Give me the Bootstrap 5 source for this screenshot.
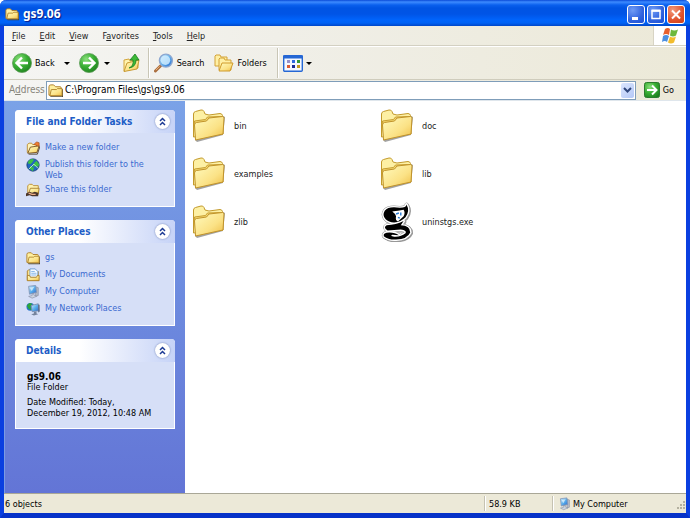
<!DOCTYPE html>
<html lang="en">
<head>
<meta charset="utf-8">
<meta name="viewport" content="width=device-width, initial-scale=1">
<title>gs9.06</title>
<link href="https://cdn.jsdelivr.net/npm/bootstrap@5.3.0/dist/css/bootstrap.min.css" rel="stylesheet">
<style>
body{font-family:"DejaVu Sans Condensed","DejaVu Sans",Tahoma,sans-serif;font-size:9px;line-height:12px;color:#000;background:#fff}
button,input{font:inherit;color:inherit;border:0;background:none;padding:0}
svg{display:block;flex:none}
.win{min-height:100vh;border:solid #0a3fe0;border-width:0 4px 5px;border-bottom-color:#0632c8;border-radius:6px 6px 0 0;background:#efeddf}
.titlebar{height:26px;margin:0 -4px;padding:2px 5px 0;border-radius:6px 6px 0 0;background:linear-gradient(#0a4ad8,#3d8bff 2px,#0a60ee 5px,#0054e3 8px,#0054e6 14px,#0064fc 20px,#0062f4 23px,#0046c8)}
.caption-text{font-family:"Noto Sans","Open Sans",sans-serif;font-size:12px;font-weight:700;line-height:16px;color:#fff;text-shadow:1px 1px 1px #0a1883}
.cap-set{gap:2px}
.cap-btn{width:18px;height:19px;border:1px solid #fff;border-radius:3px;background:radial-gradient(circle at 30% 25%,#6f9bf5,#2f62de 60%,#1c4fd4)}
.cap-close{background:radial-gradient(circle at 30% 25%,#f29a7c,#e0512b 60%,#cb3f17)}
.chrome{background:linear-gradient(90deg,#f5f5f3,#f0efe8 40%,#ece9d8)}
.menubar{height:20px;border-bottom:1px solid #d3d0c2}
.menu-items{gap:14px;padding-left:8px}
.menubar a{color:#222;text-decoration:none}
.flag{width:33px;background:#fff;border-left:1px solid #d8d4c4}
.toolbar{height:34px;border-top:1px solid #fff;border-bottom:1px solid #cfccbc;padding-left:8px}
.tool{gap:3px}
.tool-gap{margin-left:10px}
.hist{padding:6px 5px}
.vsep{width:2px;height:30px;border-left:1px solid #c9c6b6;border-right:1px solid #fff}
.caret{width:0;border:3px solid transparent;border-top-color:#000;border-bottom:0}
.addressbar{height:20px;padding-left:5px}
.addressbar label{color:#87857b;width:37px}
.address{height:19px;border:1px solid #7f9db9;background:#fff;padding:1px;gap:2px}
.address input{outline:0;min-width:0}
.addressbar label,.address input{font-size:10px}
.drop{width:13px;background:linear-gradient(135deg,#dbe6fe,#b4c8f6);border-radius:2px;color:#30477c}
.main{border-top:1px solid #dfe6ec}
.side{width:181px;padding:9px 10px 10px;gap:13px;border-left:1px solid #7b9be4;background:linear-gradient(#7ba2e7,#6d8bdf 50%,#6375d6)}
.box{background:#d6dff7;border:1px solid #fff;border-top:0;border-radius:4px 4px 0 0}
.box-head{height:23px;margin:0 -1px;padding:0 5px 0 11px;border-radius:4px 4px 0 0;background:linear-gradient(90deg,#fff 40%,#c6d3f7);color:#215dc6;font-size:10px;line-height:12px;font-weight:700}
.round{width:15px;height:15px;border-radius:50%;background:#fff;box-shadow:0 0 2px #6f80b4;color:#1c3a94}
.tasks{padding:9px 20px 8px 10px;gap:3px}
.tasks a{color:#3a6ad0;text-decoration:none;line-height:11px;gap:5px;min-height:14px}
.tasks svg{margin-top:-1px}
.details{padding:9px 20px 9px 11px;line-height:11px}
.details strong{font-size:10px}
.files{display:grid;grid-template-columns:repeat(auto-fill,188px);grid-auto-rows:48px;align-content:start;padding:1px 0 0 7px}
.files a{color:#222;text-decoration:none;gap:8px}
.statusbar{height:20px;padding-left:1px;border-top:1px solid #a9a797;background:#ece9d8}
.stat{border-left:1px solid #c5c2b2;box-shadow:inset 1px 0 #fff;height:15px}
.size{width:68px;padding-left:4px}
.zone{width:134px;padding-left:5px;gap:2px}
</style>
<script src="https://cdn.jsdelivr.net/npm/bootstrap@5.3.0/dist/js/bootstrap.bundle.min.js"></script>
</head>
<body>
<svg width="0" height="0" class="position-absolute" aria-hidden="true">
<defs>
<linearGradient id="gy" x1="0" y1="0" x2="1" y2="1"><stop offset="0" stop-color="#fffbc0"/><stop offset=".6" stop-color="#fbe286"/><stop offset="1" stop-color="#eebd45"/></linearGradient>
<radialGradient id="gg" cx=".35" cy=".3" r=".8"><stop offset="0" stop-color="#8be07c"/><stop offset=".5" stop-color="#3aaf35"/><stop offset="1" stop-color="#1c7e1c"/></radialGradient>
<linearGradient id="gb" x1="0" y1="0" x2="1" y2="1"><stop offset="0" stop-color="#d8f4ff"/><stop offset=".5" stop-color="#5ab0ee"/><stop offset="1" stop-color="#2a66c8"/></linearGradient>
<path id="gs-body" d="M27 1.500Q27 5 20 5Q8 3 4 8Q1 13 5 17Q8 20 14 20.500Q21 20 26 15Q31 8 27 1.500zM24 19Q16 23 6 23.500Q2 26 7 29L21 28Q28 29 26 32Q21 36 14 35.500Q9 35 12 33.500L19 34Q15 31 9 31Q2 31 3 35Q8 39 16 38.500Q28 38 31 31Q31 24 21 23.500z"/>
</defs>
<symbol id="bigfolder" viewBox="0 0 34 34"><path d="M3 31l2 2 26-7 2-18-2-1z" fill="#555" opacity=".55"/><path d="M1.500 28V5q0-2 2-2.500L9 1q2-.5 3 1.500l1 2.500 4 1 11-1.500q2 0 2.500 2L31 25z" fill="#fdf0a4" stroke="#c39a2c"/><path d="M2.500 12l11-1.500 2-2.500L30 7.500v16L4 30z" fill="#f3d870" stroke="#c79d30"/><path d="M3.500 31L2.500 16q0-2 2-2.500l10-1.500 2.500-3 13.500-1.500q1.500 0 1.500 1.500L31 25z" fill="url(#gy)" stroke="#c1932a"/></symbol>
<symbol id="folder" viewBox="0 0 16 16"><path d="M2 14h13V6l1 1v8H3z" fill="#4d4530"/><path d="M1 13V4q0-2 2-2h3l2 2h5q1 0 1 1v8z" fill="#fff0a0" stroke="#ad7b22"/><path d="M2 13.500L3.500 7H9l1-1h5v7.500z" fill="url(#gy)" stroke="#b1842a"/></symbol>
<symbol id="newfolder" viewBox="0 0 16 16"><path d="M1.500 13V4l2-1.500h3l1 1.500H12v9z" fill="#fff3b8" stroke="#b98a2e"/><path d="M2 14L5 7l10-1.500L12.500 13z" fill="url(#gy)" stroke="#75501d"/><path d="M9 4l3-3 3 1v4z" fill="#f07d30" stroke="#9c4612" stroke-width=".7"/><path d="M3 15h10l3-9" fill="none" stroke="#493721"/></symbol>
<symbol id="globe" viewBox="0 0 16 16"><circle cx="8" cy="8" r="7" fill="#2166bf" stroke="#143f7a"/><path d="M3 3q4-3 6-1L7 5 5 7 2 6zM9 6l3-3 3 4-1 3-3-1-3 1zM5 9l4 2-1 4-4-3z" fill="#3dc247"/><path d="M3 13l6-6 5 5" stroke="#c9f2d6" fill="none"/></symbol>
<symbol id="sharefolder" viewBox="0 0 16 16"><path d="M2 12V3l2-1.500h3L8.500 3H14v9z" fill="#fff3b0" stroke="#b98a2e"/><path d="M3 12L5 6h10l-1 7z" fill="url(#gy)" stroke="#a47928"/><path d="M0 12l4-2 3 1 3-1 4 1v4H7l-3-1-4 1z" fill="#4a352b"/><path d="M3 11.500l4 1.500h4" stroke="#efb087" stroke-width="1.500" fill="none"/></symbol>
<symbol id="docs" viewBox="0 0 16 16"><path d="M1.500 14V3.500L3 2h3l2 2h6v10z" fill="#fbe391" stroke="#a87a22"/><path d="M4.500 9V1h6l3 3v7h-9z" fill="#f4faff" stroke="#6797ce"/><path d="M6 4h4M6 6h6M6 8h6" stroke="#7fb1e6"/><path d="M1.500 14.500v-6H4l1 2h7l1-2h2v6z" fill="url(#gy)" stroke="#a87a22"/></symbol>
<symbol id="pc" viewBox="0 0 16 16"><path d="M11 2l3 1v9l-3 1z" fill="#b7bdc9" stroke="#747c90" stroke-width=".6"/><path d="M3 1.500l8-1 1 8-8 2z" fill="url(#gb)" stroke="#8496b6"/><path d="M4.500 3l5-1-3 5z" fill="#fff" opacity=".6"/><path d="M7 10l2-.5v2L12 13l-5 2-4-2 4-1z" fill="#cdd5e1" stroke="#76809a" stroke-width=".6"/></symbol>
<symbol id="net" viewBox="0 0 16 16"><circle cx="5" cy="5.500" r="4.500" fill="#2773c9"/><path d="M1 4l3-3 3 1-2 3 1 4-3-1z" fill="#2ba63a"/><path d="M6 4l8-2 1 8-8 1z" fill="url(#gb)" stroke="#8190ad"/><path d="M9 11h3v2l2 1-5 1.500L6 14l3-1z" fill="#75839c"/><path d="M14 3h1.500v8L14 12z" fill="#596682"/></symbol>
<symbol id="chev2" viewBox="0 0 15 15"><path d="M5 7l2.500-2.500L10 7M5 11l2.500-2.500L10 11" fill="none" stroke="currentColor" stroke-width="1.500"/></symbol>
<symbol id="gs" viewBox="-1 -1 36 42"><g stroke-linejoin="round"><use href="#gs-body" x="1" y="1" fill="#aaa" stroke="#999" stroke-width="4"/><use href="#gs-body" fill="#fff" stroke="#999" stroke-width="4"/><use href="#gs-body" fill="#fff" stroke="#fff" stroke-width="3"/></g><use href="#gs-body"/><path d="M12 9q4-1 6-1l6-1q2 3 0 7l-6 5.500q-3-1-2-5.500-1-3-4-5z" fill="#fff"/><path d="M16 11.500l3-1M21 10v3M18 15l2 1" stroke="#287bd5" stroke-width="1.500"/></symbol>
</svg>

<div class="win d-flex flex-column">
<header class="titlebar d-flex align-items-center">
<svg width="14" height="14"><use href="#folder"/></svg>
<h1 class="caption-text flex-grow-1 mb-0 ms-1">gs9.06</h1>
<div class="cap-set d-flex">
<button class="cap-btn" aria-label="Minimize"><svg width="16" height="17"><path d="M4 12.500h6" stroke="#fff" stroke-width="3"/></svg></button>
<button class="cap-btn" aria-label="Maximize"><svg width="16" height="17"><path d="M4 12.500V5h8v7.500z" fill="none" stroke="#fff" stroke-width="1.500"/><path d="M3.500 4.500h9" stroke="#fff" stroke-width="2"/></svg></button>
<button class="cap-btn cap-close" aria-label="Close"><svg width="16" height="17"><path d="M4 4.500l8 8M12 4.500l-8 8" stroke="#fff" stroke-width="2"/></svg></button>
</div>
</header>

<nav class="menubar chrome d-flex" aria-label="Menu">
<div class="menu-items d-flex align-items-center flex-grow-1">
<a href="#"><u>F</u>ile</a><a href="#"><u>E</u>dit</a><a href="#"><u>V</u>iew</a><a href="#">F<u>a</u>vorites</a><a href="#"><u>T</u>ools</a><a href="#"><u>H</u>elp</a>
</div>
<div class="flag d-flex align-items-center justify-content-center"><svg width="18" height="17" viewBox="0 0 18 17"><path d="M4 2q3-2 5 0L8 8Q5 6 2 8z" fill="#e8602c"/><path d="M10 2.500q3 2 7 0L15 8.500q-3 2-6 0z" fill="#6cb83c"/><path d="M2 9q3-2 6 0l-2 6q-2-2-5 0z" fill="#4c8fe0"/><path d="M9 9.500q3 2 6 0l-2 6q-3 2-6 0z" fill="#f2bc2c"/></svg></div>
</nav>

<div class="toolbar chrome d-flex align-items-center" role="toolbar" aria-label="Standard buttons">
<button class="tool d-flex align-items-center"><svg width="20" height="20"><circle cx="10" cy="10" r="9.500" fill="url(#gg)" stroke="#5b9a56" stroke-width=".8"/><path d="M16 10H5M10 4.500L4.500 10l5.500 5.500" fill="none" stroke="#fff" stroke-width="2.400"/></svg>Back</button>
<button class="hist ms-1" aria-label="Back history"><span class="caret d-block"></span></button>
<button class="ms-1" aria-label="Forward"><svg width="20" height="20"><circle cx="10" cy="10" r="9.500" fill="url(#gg)" stroke="#5b9a56" stroke-width=".8"/><path d="M4 10h11M10 4.500l5.500 5.500-5.500 5.500" fill="none" stroke="#fff" stroke-width="2.400"/></svg></button>
<button class="hist" aria-label="Forward history"><span class="caret d-block"></span></button>
<button class="ms-2 me-1" aria-label="Up"><svg width="17" height="20" viewBox="0 0 17 20"><path d="M1 18V7l5-1 1 2 8-2v9z" fill="#fff3b0" stroke="#d3a63c"/><path d="M1 18.500L4 10l12-3-2 9z" fill="url(#gy)" stroke="#c99b35"/><path d="M6 15q5-2 4-8H7l5-6 4 6h-3q0 7-7 8z" fill="#3cba38" stroke="#1b7f20" stroke-width=".8"/></svg></button>
<span class="vsep ms-1"></span>
<button class="tool d-flex align-items-center ms-1"><svg width="20" height="20" viewBox="0 0 21 20"><path d="M1.500 18.500L7 13" stroke="#a96d3d" stroke-width="3" stroke-linecap="round"/><path d="M2 17.500l4-4" stroke="#efb37a"/><circle cx="12.500" cy="7.500" r="6.800" fill="url(#gb)" stroke="#8da7d0" stroke-width="1.500"/><circle cx="12" cy="7" r="5" fill="#d6efff" opacity=".8"/></svg>Search</button>
<button class="tool tool-gap d-flex align-items-center"><svg width="20" height="20"><path d="M1 13V3l1-1h4l1 2h6v9z" fill="#fff0a5" stroke="#d3a238"/><path d="M5 17V6l1-1h4l1 2h6v10z" fill="#fff0a5" stroke="#d3a238"/><path d="M5 18l3-8h11l-3 8z" fill="url(#gy)" stroke="#d09b2d"/></svg>Folders</button>
<span class="vsep tool-gap"></span>
<button class="tool d-flex align-items-center ms-1" aria-label="Views"><svg width="20" height="17"><rect x=".7" y=".7" width="18.600" height="15.600" rx="1" fill="#f4f8ff" stroke="#2567d4" stroke-width="1.400"/><path d="M0 2h20" stroke="#2567d4" stroke-width="3"/><path fill="#9791c8" d="M4 5h3v3H4z"/><path fill="#2f6be0" d="M9 5h3v3H9z"/><path fill="#35993a" d="M14 5h3v3h-3z"/><path fill="#dc5a33" d="M4 10h3v3H4z"/><path fill="#182a92" d="M9 10h3v3H9z"/><path fill="#c79a20" d="M14 10h3v3h-3z"/></svg><span class="caret"></span></button>
</div>

<div class="addressbar chrome d-flex align-items-center">
<label for="addr">A<u>d</u>dress</label>
<div class="address d-flex flex-grow-1"><svg width="15" height="15"><use href="#folder"/></svg><input id="addr" class="flex-grow-1" value="C:\Program Files\gs\gs9.06"><button class="drop d-flex align-items-center justify-content-center" aria-label="Show addresses"><svg width="9" height="7"><path d="M1 1l3.500 3.500L8 1" fill="none" stroke="currentColor" stroke-width="2"/></svg></button></div>
<button class="tool d-flex align-items-center ms-2 me-2 pe-1"><svg width="16" height="16"><rect x=".5" y=".5" width="15" height="15" rx="2" fill="url(#gg)" stroke="#2b7c2d"/><path d="M3 8h9M8 3.500L12.500 8 8 12.500" fill="none" stroke="#fff" stroke-width="2"/></svg>Go</button>
</div>

<div class="main d-flex flex-grow-1 bg-white">
<aside class="side flex-shrink-0 d-flex flex-column">
<section class="box">
<h2 class="box-head d-flex align-items-center justify-content-between">File and Folder Tasks<button class="round" aria-label="Collapse File and Folder Tasks"><svg width="15" height="15"><use href="#chev2"/></svg></button></h2>
<div class="tasks d-flex flex-column">
<a href="#" class="d-flex align-items-start"><svg width="14" height="14"><use href="#newfolder"/></svg>Make a new folder</a>
<a href="#" class="d-flex align-items-start"><svg width="14" height="14"><use href="#globe"/></svg>Publish this folder to the Web</a>
<a href="#" class="d-flex align-items-start"><svg width="14" height="14"><use href="#sharefolder"/></svg>Share this folder</a>
</div></section>
<section class="box">
<h2 class="box-head d-flex align-items-center justify-content-between">Other Places<button class="round" aria-label="Collapse Other Places"><svg width="15" height="15"><use href="#chev2"/></svg></button></h2>
<div class="tasks d-flex flex-column">
<a href="#" class="d-flex align-items-start"><svg width="14" height="14"><use href="#folder"/></svg>gs</a>
<a href="#" class="d-flex align-items-start"><svg width="14" height="14"><use href="#docs"/></svg>My Documents</a>
<a href="#" class="d-flex align-items-start"><svg width="14" height="14"><use href="#pc"/></svg>My Computer</a>
<a href="#" class="d-flex align-items-start"><svg width="14" height="14"><use href="#net"/></svg>My Network Places</a>
</div></section>
<section class="box">
<h2 class="box-head d-flex align-items-center justify-content-between">Details<button class="round" aria-label="Collapse Details"><svg width="15" height="15"><use href="#chev2"/></svg></button></h2>
<div class="details"><strong class="d-block">gs9.06</strong>File Folder<p class="mb-0 mt-1">Date Modified: Today, December 19, 2012, 10:48 AM</p></div></section>
</aside>
<main class="files flex-grow-1">
<a href="#" class="d-flex align-items-center"><svg width="34" height="34"><use href="#bigfolder"/></svg>bin</a>
<a href="#" class="d-flex align-items-center"><svg width="34" height="34"><use href="#bigfolder"/></svg>doc</a>
<a href="#" class="d-flex align-items-center"><svg width="34" height="34"><use href="#bigfolder"/></svg>examples</a>
<a href="#" class="d-flex align-items-center"><svg width="34" height="34"><use href="#bigfolder"/></svg>lib</a>
<a href="#" class="d-flex align-items-center"><svg width="34" height="34"><use href="#bigfolder"/></svg>zlib</a>
<a href="#" class="d-flex align-items-center"><svg width="34" height="40"><use href="#gs"/></svg>uninstgs.exe</a>
</main>
</div>

<footer class="statusbar d-flex align-items-center">
<span class="flex-grow-1">6 objects</span>
<span class="stat size d-flex align-items-center">58.9 KB</span>
<span class="stat zone d-flex align-items-center"><svg width="13" height="14"><use href="#pc"/></svg><span class="flex-grow-1">My Computer</span><svg width="11" height="11" class="align-self-end"><path d="M8 2h2M8 5h2M8 8h2M5 5h2M5 8h2M2 8h2" stroke="#b4b19f" stroke-width="2"/></svg></span>
</footer>
</div>
</body>
</html>
